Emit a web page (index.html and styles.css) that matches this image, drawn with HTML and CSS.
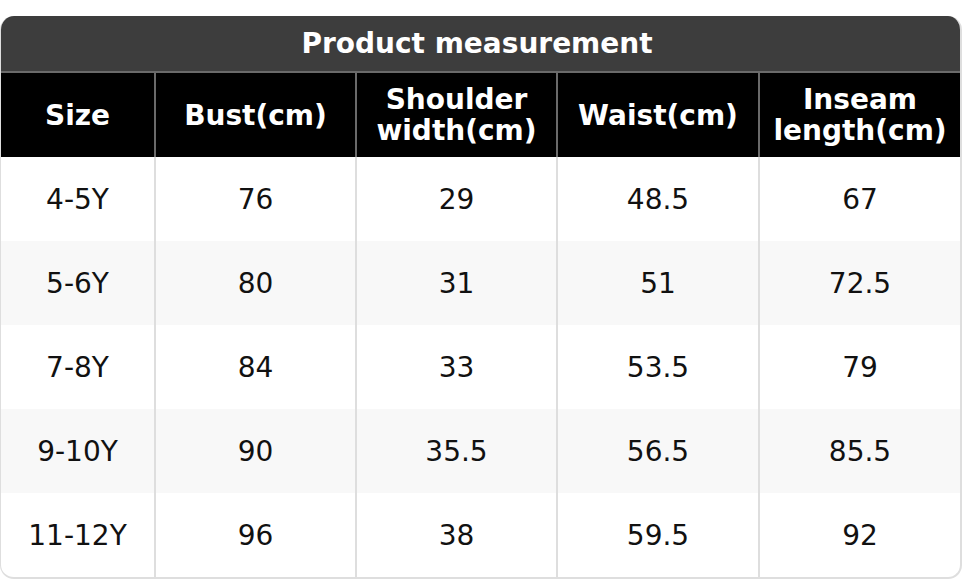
FILE: index.html
```html
<!DOCTYPE html>
<html>
<head>
<meta charset="utf-8">
<link rel="stylesheet" href="styles.css">
</head>
<body>
<div class="page">
  <div class="card">
    <div class="title">Product measurement</div>
    <table class="sizes">
      <colgroup>
        <col class="c1"><col class="c2"><col class="c3"><col class="c4"><col class="c5">
      </colgroup>
      <thead>
        <tr>
          <th>Size</th>
          <th>Bust(cm)</th>
          <th>Shoulder<br>width(cm)</th>
          <th>Waist(cm)</th>
          <th>Inseam<br>length(cm)</th>
        </tr>
      </thead>
      <tbody>
        <tr><td>4-5Y</td><td>76</td><td>29</td><td>48.5</td><td>67</td></tr>
        <tr><td>5-6Y</td><td>80</td><td>31</td><td>51</td><td>72.5</td></tr>
        <tr><td>7-8Y</td><td>84</td><td>33</td><td>53.5</td><td>79</td></tr>
        <tr><td>9-10Y</td><td>90</td><td>35.5</td><td>56.5</td><td>85.5</td></tr>
        <tr><td>11-12Y</td><td>96</td><td>38</td><td>59.5</td><td>92</td></tr>
      </tbody>
    </table>
  </div>
</div>
</body>
</html>
```
FILE: styles.css
```css
html, body {
  margin: 0;
  padding: 0;
  background: #ffffff;
}
.page {
  padding-top: 16px;
  width: 962px;
  font-family: "DejaVu Sans", Verdana, sans-serif;
}
.card {
  box-sizing: border-box;
  width: 962px;
  height: 563px;
  border: 2px solid #dedede;
  border-left-width: 1px;
  border-top: none;
  border-radius: 14px;
  overflow: hidden;
  background: #ffffff;
}
.title {
  height: 55px;
  margin: 0 -2px 0 -1px;
  padding-right: 8px;
  background: #3d3d3d;
  border-bottom: 2px solid #6a6a6a;
  color: #ffffff;
  font-weight: bold;
  font-size: 28px;
  line-height: 55px;
  text-align: center;
}
.sizes {
  width: 100%;
  border-collapse: collapse;
  table-layout: fixed;
}
.c1 { width: 154px; }
.c2 { width: 201px; }
.c3 { width: 201px; }
.c4 { width: 202px; }
.c5 { width: auto; }
.sizes th {
  height: 84px;
  padding: 0;
  background: #000000;
  color: #ffffff;
  font-weight: bold;
  font-size: 28px;
  line-height: 31px;
  text-align: center;
  border-left: 2px solid #6a6a6a;
}
.sizes td {
  height: 84px;
  padding: 0;
  color: #111111;
  font-size: 28px;
  text-align: center;
  border-left: 2px solid #dedede;
}
.sizes th:first-child,
.sizes td:first-child {
  border-left: none;
}
.sizes tbody tr:nth-child(even) td {
  background: #f8f8f8;
}
```
